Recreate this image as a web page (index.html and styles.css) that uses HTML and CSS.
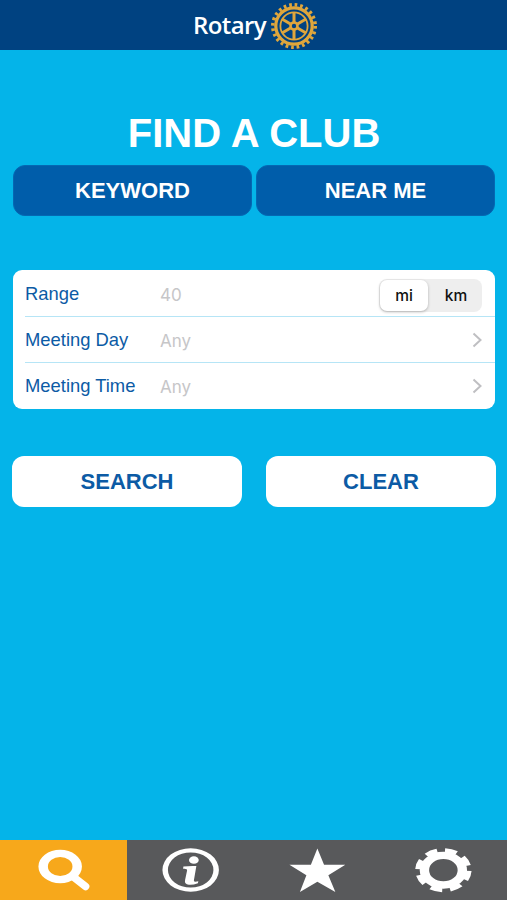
FILE: index.html
```
<!DOCTYPE html>
<html lang="en">
<head>
<meta charset="utf-8">
<meta name="viewport" content="width=device-width">
<title>Find a Club</title>
<link rel="stylesheet" href="styles.css">
</head>
<body>
<header class="topbar">
  <span class="brand">Rotary</span>
  <svg class="wheel" viewBox="-24 -24 48 48" aria-hidden="true">
    <g fill="none" stroke="#dfa63c">
      <circle r="21.2" stroke-width="3.6" stroke-dasharray="2.700 2.850"/>
      <circle r="18.200" stroke-width="3.200"/>
      <circle r="13.600" stroke-width="1.800"/>
      <circle r="3.500" stroke-width="2.600"/>
      <path stroke-width="3" d="M0-4V-14M0 4V14M3.500-2L12-7M-3.500 2L-12 7M-3.500-2L-12-7M3.500 2L12 7"/>
    </g>
  </svg>
</header>
<main class="content">
  <h1 class="title">FIND A CLUB</h1>
  <div class="modes">
    <button class="mode">KEYWORD</button>
    <button class="mode">NEAR ME</button>
  </div>
  <section class="form">
    <div class="row">
      <span class="label">Range</span><span class="value">40</span>
      <div class="segmented"><span class="segment selected">mi</span><span class="segment">km</span></div>
    </div>
    <div class="row">
      <span class="label">Meeting Day</span><span class="value">Any</span>
      <svg class="chevron" viewBox="0 0 10 16"><path d="M1.500 1.500L8.500 8L1.500 14.500"/></svg>
    </div>
    <div class="row">
      <span class="label">Meeting Time</span><span class="value">Any</span>
      <svg class="chevron" viewBox="0 0 10 16"><path d="M1.500 1.500L8.500 8L1.500 14.500"/></svg>
    </div>
  </section>
  <div class="actions">
    <button class="action">SEARCH</button>
    <button class="action">CLEAR</button>
  </div>
</main>
<nav class="tabs">
  <a class="tab active"><svg viewBox="0 0 127 60"><path fill="#fff" fill-rule="evenodd" d="M38.500 26.500a21.800 16.800 0 1 0 43.600 0a21.800 16.800 0 1 0-43.600 0zM48 26.500a12.300 9.600 0 1 1 24.600 0a12.300 9.600 0 1 1-24.600 0z"/><path d="M73 36.500L85.800 46.500" stroke="#fff" stroke-width="7.500" stroke-linecap="round"/></svg></a>
  <a class="tab"><svg viewBox="0 0 127 60"><path fill="#fff" fill-rule="evenodd" d="M35.500 30a28.300 21.800 0 1 0 56.600 0a28.300 21.800 0 1 0-56.600 0zM41 30a22.800 17.600 0 1 1 45.600 0a22.800 17.600 0 1 1-45.600 0z"/><ellipse cx="67" cy="20" rx="4.900" ry="3.700" fill="#fff"/><path fill="#fff" d="M56.500 26.500Q62 25.900 69.500 26.100L67 40.500Q67 42.600 71.500 41.300L71 43.200Q66 45.200 62 44.800Q57.200 44.300 58.200 40L60.200 30.500Q60.500 28.300 56.200 28.800Z"/></svg></a>
  <a class="tab"><svg viewBox="0 0 127 60"><path fill="#fff" d="M63.500 8.500L70.200 24.700H91.500L74.500 35.200L81.500 52L63.500 41.800L46 52L52.500 35.200L35.500 24.700H57Z"/></svg></a>
  <a class="tab"><svg viewBox="0 0 127 60"><g transform="translate(63.500 30.200) scale(1 .78)"><circle r="19" fill="none" stroke="#fff" stroke-width="9.400"/><circle r="25" fill="none" stroke="#fff" stroke-width="6.500" stroke-dasharray="11.800 7.835" transform="rotate(2)"/></g></svg></a>
</nav>
</body>
</html>
```
FILE: styles.css
```
* { box-sizing: border-box; }
body {
  margin: 0;
  height: 900px;
  display: flex;
  flex-direction: column;
  background: #04b4e9;
  font-family: "Liberation Sans", Arial, sans-serif;
  overflow: hidden;
}
.topbar {
  height: 50px;
  flex: none;
  display: flex;
  align-items: center;
  padding: 2px 0 0 193px;
  background: #004281;
}
.brand {
  width: 77px;
  color: #fff;
  font: 600 24px/30px "Open Sans", sans-serif;
  letter-spacing: -.6px;
  padding-bottom: 3px;
}
.wheel { width: 48px; height: 48px; }
.content { flex: 1; padding: 60px 11px 0 12px; }
.title {
  margin: 0;
  height: 55px;
  color: #fff;
  text-align: center;
  font-size: 40px;
  line-height: 47px;
}
.modes { display: flex; gap: 4px; padding: 0 1px; }
.mode, .action {
  flex: 1;
  height: 51px;
  padding: 0;
  border: 0;
  border-radius: 12px;
  font: bold 22px/50px "Liberation Sans", Arial, sans-serif;
}
.mode { background: #005daa; color: #fff; border: 1px solid #0568b3; line-height: 47px; }
.form {
  margin: 54px 1px 0;
  height: 139px;
  padding-left: 12px;
  border-radius: 9px;
  background: #fff;
}
.row {
  height: 46px;
  display: flex;
  align-items: center;
  padding-right: 13px;
}
.row + .row { border-top: 1px solid #b6e5f6; }
.label { width: 135px; color: #0c5ba5; font-size: 18.400px; padding-top: 1px; }
.value { flex: 1; color: #c6c6c8; font: 17px/20px Inter, sans-serif; padding-top: 3px; }
.segmented {
  display: flex;
  width: 103px;
  height: 33px;
  margin: 5px 0 0;
  padding: 1px;
  border-radius: 8px;
  background: #eee;
}
.segment { flex: 1; padding-left: 3px; text-align: center; font: 500 15.500px/31px Inter, sans-serif; color: #111; }
.selected { flex: 0 0 48px; padding: 0; border-radius: 7px; background: #fff; box-shadow: 0 1px 3px #0004; }
.chevron { width: 10px; height: 16px; fill: none; stroke: #bfbfc2; stroke-width: 2; }
.actions { display: flex; gap: 24px; margin-top: 47px; }
.action { background: #fff; color: #0c5ba5; line-height: 49px; }
.tabs { height: 60px; flex: none; display: grid; grid-template-columns: repeat(4, 1fr); background: #58595b; }
.tab svg { display: block; width: 100%; height: 60px; }
.active { background: #f7a81b; }
```
